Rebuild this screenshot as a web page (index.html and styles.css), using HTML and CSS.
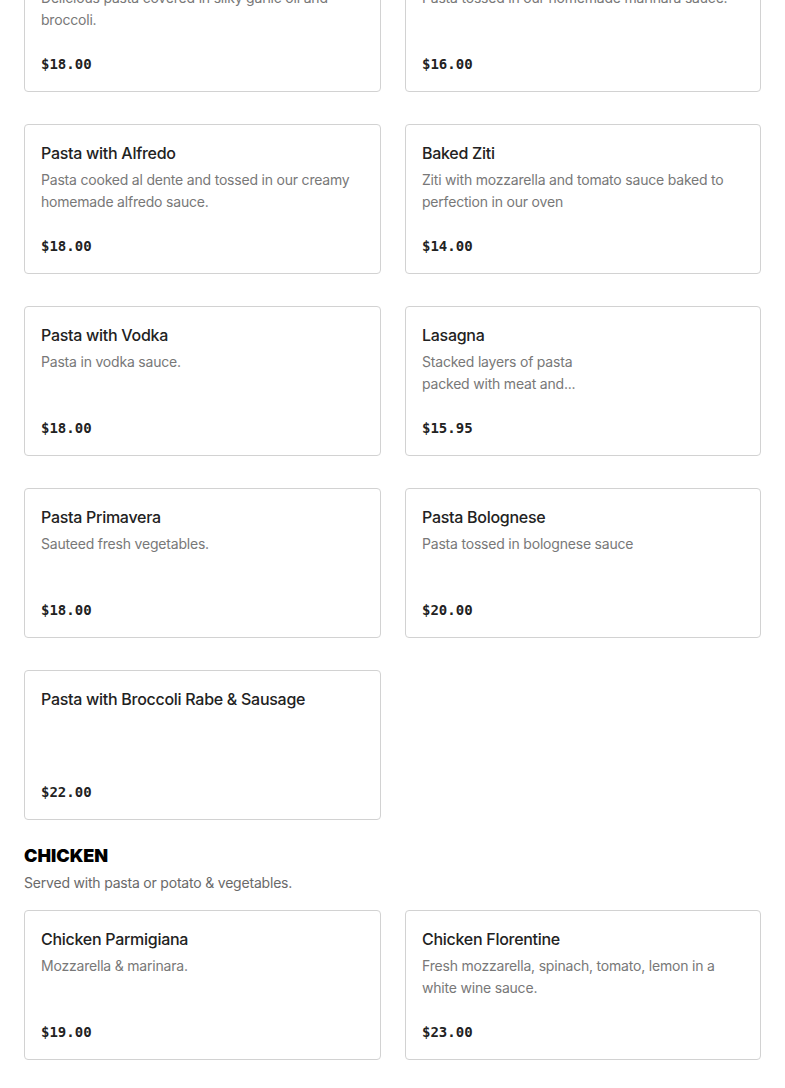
FILE: index.html
```html
<!DOCTYPE html>
<html>
<head>
<meta charset="utf-8">
<link rel="stylesheet" href="styles.css">
</head>
<body>
<main class="menu">
  <section class="section">
    <div class="grid">
      <div class="card">
        <div class="title">Pasta with Broccoli</div>
        <div class="desc">Delicious pasta covered in silky garlic oil and broccoli.</div>
        <div class="price">$18.00</div>
      </div>
      <div class="card">
        <div class="title">Pasta with Marinara</div>
        <div class="desc">Pasta tossed in our homemade marinara sauce.</div>
        <div class="price">$16.00</div>
      </div>
      <div class="card">
        <div class="title">Pasta with Alfredo</div>
        <div class="desc">Pasta cooked al dente and tossed in our creamy homemade alfredo sauce.</div>
        <div class="price">$18.00</div>
      </div>
      <div class="card">
        <div class="title">Baked Ziti</div>
        <div class="desc">Ziti with mozzarella and tomato sauce baked to perfection in our oven</div>
        <div class="price">$14.00</div>
      </div>
      <div class="card">
        <div class="title">Pasta with Vodka</div>
        <div class="desc">Pasta in vodka sauce.</div>
        <div class="price">$18.00</div>
      </div>
      <div class="card">
        <div class="title">Lasagna</div>
        <div class="desc narrow">Stacked layers of pasta packed with meat and...</div>
        <div class="price">$15.95</div>
      </div>
      <div class="card">
        <div class="title">Pasta Primavera</div>
        <div class="desc">Sauteed fresh vegetables.</div>
        <div class="price">$18.00</div>
      </div>
      <div class="card">
        <div class="title">Pasta Bolognese</div>
        <div class="desc">Pasta tossed in bolognese sauce</div>
        <div class="price">$20.00</div>
      </div>
      <div class="card">
        <div class="title">Pasta with Broccoli Rabe &amp; Sausage</div>
        <div class="desc"></div>
        <div class="price">$22.00</div>
      </div>
    </div>
  </section>
  <section class="section">
    <h2 class="section-title">CHICKEN</h2>
    <p class="section-sub">Served with pasta or potato &amp; vegetables.</p>
    <div class="grid">
      <div class="card">
        <div class="title">Chicken Parmigiana</div>
        <div class="desc">Mozzarella &amp; marinara.</div>
        <div class="price">$19.00</div>
      </div>
      <div class="card">
        <div class="title">Chicken Florentine</div>
        <div class="desc">Fresh mozzarella, spinach, tomato, lemon in a white wine sauce.</div>
        <div class="price">$23.00</div>
      </div>
    </div>
  </section>
</main>
</body>
</html>
```

FILE: styles.css
```css
* { box-sizing: border-box; }
html, body { margin: 0; padding: 0; background: #ffffff; }
body {
  font-family: Inter, "Liberation Sans", Arial, sans-serif;
  color: #1f1f1f;
  overflow: hidden;
}
.menu {
  padding: 0 24px;
  margin-top: -58px;
}
.section { margin-bottom: 24px; }
.grid {
  display: grid;
  grid-template-columns: 357px 356px;
  column-gap: 24px;
  row-gap: 32px;
}
.card {
  height: 150px;
  border: 1px solid #d2d2d2;
  border-radius: 4px;
  padding: 16px;
  display: flex;
  flex-direction: column;
}
.title {
  font-size: 16px;
  line-height: 24px;
  font-weight: 550;
  letter-spacing: -0.28px;
  color: #222222;
}
.desc {
  margin-top: 4px;
  font-size: 14px;
  line-height: 22px;
  letter-spacing: -0.2px;
  color: #787878;
  min-height: 44px;
}
.desc.narrow { max-width: 180px; }
.price {
  margin-top: auto;
  padding-bottom: 2px;
  font-family: "DejaVu Sans Mono", "Liberation Mono", monospace;
  font-size: 14px;
  line-height: 18px;
  font-weight: 700;
  color: #222222;
}
.section-title {
  margin: 0;
  font-size: 18px;
  line-height: 24px;
  font-weight: 900;
  color: #000;
}
.section-sub {
  margin: 4px 0 16px;
  font-size: 14px;
  line-height: 22px;
  letter-spacing: -0.2px;
  color: #6a6a6a;
}
```
